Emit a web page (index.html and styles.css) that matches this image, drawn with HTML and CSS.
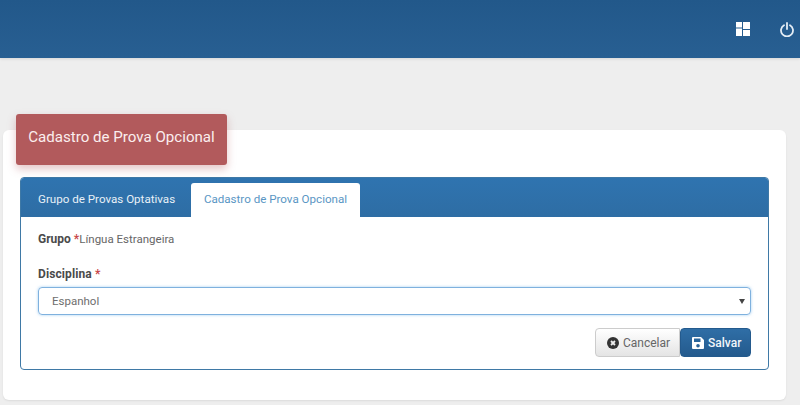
FILE: index.html
```html
<!DOCTYPE html>
<html lang="pt">
<head>
<meta charset="utf-8">
<title>Cadastro de Prova Opcional</title>
<link rel="stylesheet" href="styles.css">
</head>
<body>
<header class="topbar">
  <svg class="top-icon" width="14" height="14" viewBox="0 0 14 14"><path fill="#fff" d="M0 0h6v5.500H0zM7 0h7v7H7zM0 6.500h6V14H0zM7 8h7v6H7z"/></svg>
  <svg class="top-icon" width="14" height="15" viewBox="0 0 14 15"><path fill="none" stroke="#e4edf5" stroke-width="1.800" stroke-linecap="round" d="M4 3.200a6 6 0 1 0 6 0M7 1v6"/></svg>
</header>
<main class="main">
  <section class="card">
    <h1 class="badge">Cadastro de Prova Opcional</h1>
    <div class="panel">
      <nav class="tabs">
        <span class="tab">Grupo de Provas Optativas</span>
        <span class="tab tab-active">Cadastro de Prova Opcional</span>
      </nav>
      <div class="panel-body">
        <p class="group"><b>Grupo</b> <i class="req">*</i><span class="group-value">Língua Estrangeira</span></p>
        <label class="label" for="disc">Disciplina <i class="req">*</i></label>
        <div class="select">
          <span id="disc">Espanhol</span>
          <svg width="6" height="5" viewBox="0 0 6 5"><path fill="#444" d="M0 0h6L3 5z"/></svg>
        </div>
        <div class="actions">
          <button class="btn btn-cancel">
            <svg width="12" height="12" viewBox="0 0 12 12"><circle cx="6" cy="6" r="6" fill="#333"/><path stroke="#eee" stroke-width="1.800" d="M4 4l4 4M8 4l-4 4"/></svg>
            Cancelar
          </button>
          <button class="btn btn-save">
            <svg width="12" height="12" viewBox="0 0 12 12"><path fill="#fff" fill-rule="evenodd" d="M1 0h8l3 3v8a1 1 0 0 1-1 1H1a1 1 0 0 1-1-1V1a1 1 0 0 1 1-1zM2 1.500V5h6.500V1.500zM6 7a1.800 1.800 0 1 0 0 3.600A1.800 1.800 0 0 0 6 7z"/></svg>
            Salvar
          </button>
        </div>
      </div>
    </div>
  </section>
</main>
</body>
</html>
```
FILE: styles.css
```css
* { box-sizing: border-box; }
html, body { margin: 0; height: 405px; overflow: hidden; }
body {
  background: #eeeeee;
  font-family: Roboto, "Liberation Sans", sans-serif;
  font-size: 12px;
  color: #666;
}
.topbar {
  height: 58px;
  background: linear-gradient(#22588a, #285f92);
  display: flex;
  justify-content: flex-end;
  align-items: center;
  gap: 30px;
  padding: 0 6px 0 0;
  box-shadow: 0 1px 3px rgba(0,0,0,.1);
}
.main { padding: 72px 14px 0 3px; }
.card {
  height: 270px;
  background: #fff;
  border-radius: 6px;
  box-shadow: 0 1px 2px rgba(0,0,0,.08);
  padding: 0 17px;
}
.badge {
  display: block;
  width: 211px;
  height: 51px;
  margin: 0 0 12px -4px;
  position: relative;
  top: -16px;
  background: #b25a5c;
  color: #fbeeee;
  font-size: 15.100px;
  font-weight: 400;
  line-height: 47px;
  text-align: center;
  border-radius: 3px;
  box-shadow: 0 4px 8px rgba(178,90,92,.35);
}
.panel {
  width: 749px;
  height: 193px;
  margin-top: -16px;
  border: 1px solid #3f79a6;
  border-radius: 4px;
  overflow: hidden;
}
.tabs {
  height: 40px;
  margin: -1px -1px 0;
  padding: 6px 0 0;
  background: linear-gradient(#2f74b0, #2e6da4);
  display: flex;
}
.tab {
  flex: none;
  line-height: 33px;
  color: #e8f0f7;
  font-size: 11.600px;
}
.tab:first-child { width: 171px; padding-left: 18px; white-space: nowrap; }
.tab-active {
  width: 169px;
  height: 34px;
  background: #fff;
  color: #5a96c4;
  border-radius: 3px 3px 0 0;
  text-align: center;
}
.panel-body { padding: 15px 17px 0 17px; }
.group { margin: 0 0 21px; font-size: 12px; line-height: 14px; }
.group b, .label { font-weight: 700; color: #4a4a4a; }
.group-value { font-size: 11.500px; }
.req { color: #c8474a; font-style: normal; font-weight: 700; }
.label { display: block; font-size: 12px; line-height: 14px; margin-bottom: 6px; letter-spacing: .1px; }
.select {
  width: 713px;
  height: 28px;
  border: 1px solid #7fb1de;
  border-radius: 4px;
  box-shadow: 0 0 3px rgba(102,175,233,.6);
  display: flex;
  justify-content: space-between;
  align-items: center;
  padding: 0 5px 0 13px;
  font-size: 11.500px;
  color: #6e6e6e;
}
.actions { display: flex; justify-content: flex-end; margin: 13px 0 0; width: 713px; }
.btn {
  height: 29px;
  font: inherit;
  display: flex;
  align-items: center;
  gap: 4px;
  border-radius: 4px;
  border: 1px solid #ccc;
  padding: 0 0 0 11px;
  cursor: pointer;
}
.btn-cancel {
  width: 85px;
  background: linear-gradient(#fff, #e4e4e4);
  color: #666;
  border-radius: 4px 0 0 4px;
}
.btn-save {
  width: 71px;
  background: linear-gradient(#2f6ea6, #245a8d);
  border-color: #245a8d;
  color: #f2f6fa;
  font-weight: 500;
}
```
